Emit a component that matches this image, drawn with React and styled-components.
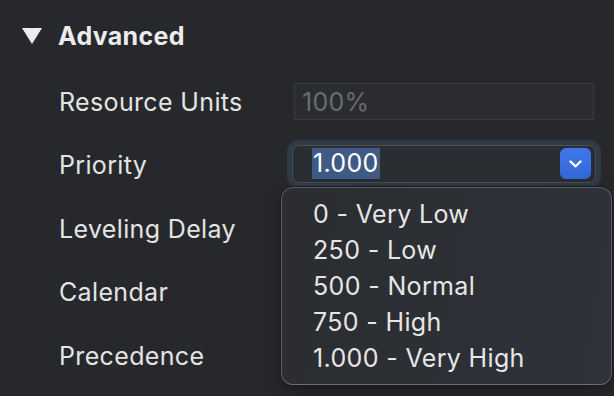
import React from "react";
import styled, { createGlobalStyle } from "styled-components";

const Global = createGlobalStyle`
  html, body { margin: 0; padding: 0; background: #26282b; }
  body { font-family: Inter, "Noto Sans", sans-serif; -webkit-font-smoothing: antialiased; }
`;

const Page = styled.div`
  width: 614px;
  height: 396px;
  overflow: hidden;
  background: #26282b;
  padding-top: 4px;
  box-sizing: border-box;
`;

const Header = styled.div`
  height: 64px;
  display: flex;
  align-items: center;
  padding-left: 22px;
  gap: 16px;
`;

const Triangle = styled.span`
  width: 0;
  height: 0;
  border-left: 10.5px solid transparent;
  border-right: 10.5px solid transparent;
  border-top: 16px solid #ececec;
`;

const Title = styled.span`
  font-size: 25px;
  font-weight: 700;
  letter-spacing: 0.3px;
  color: #ececec;
  line-height: 64px;
`;

const Rows = styled.div`
  margin-top: 2px;
  display: grid;
  grid-template-columns: 233px 304px;
  grid-auto-rows: 63.5px;
  padding-left: 59px;
  align-items: center;
`;

const Label = styled.div`
  font-size: 25px;
  letter-spacing: 0.35px;
  color: #e4e4e4;
  line-height: 32px;
`;

const Field = styled.div`
  margin-left: 2px;
  width: 300px;
  height: 37px;
  box-sizing: border-box;
  background: #2a2c2f;
  border: 1px solid #393b3f;
  display: flex;
  align-items: center;
  padding-left: 7px;
  font-size: 25px;
  letter-spacing: 0.3px;
  color: #6a6c6f;
`;

const SelectWrap = styled.div`
  position: relative;
  width: 304px;
  height: 38px;
  margin-top: -3px;
`;

const Select = styled.div`
  width: 100%;
  height: 100%;
  box-sizing: border-box;
  border: 1px solid #4b5058;
  border-radius: 7px;
  background: #2a2d31;
  box-shadow: 0 0 0 5px #303a46;
  display: flex;
  align-items: center;
  padding-left: 19px;
  padding-right: 4px;
`;

const Selected = styled.span`
  background: #3f5a84;
  color: #ffffff;
  font-size: 25px;
  letter-spacing: 0.3px;
  line-height: 31px;
  height: 31px;
  padding: 0 1px;
`;

const ChevronButton = styled.span`
  margin-left: auto;
  width: 31px;
  height: 31px;
  border-radius: 6px;
  background: linear-gradient(#3f77ea, #3467d8);
  display: flex;
  align-items: center;
  justify-content: center;
`;

const Menu = styled.div`
  position: absolute;
  left: -11px;
  top: 42px;
  width: 331px;
  height: 198px;
  box-sizing: border-box;
  border-radius: 12px;
  border: 1px solid #595c61;
  border-bottom-color: #6b6e73;
  background: linear-gradient(100deg, #2b2d30 0%, #2c2f34 50%, #2e333c 100%);
  box-shadow: 0 0 0 1px #1c1d1f, 0 6px 18px rgba(0, 0, 0, 0.35);
  padding: 8px 0 8px 31px;
  z-index: 2;
`;

const Item = styled.div`
  font-size: 25px;
  letter-spacing: 0.35px;
  line-height: 36px;
  color: #e6e6e6;
  white-space: nowrap;
`;

const items = ["0 - Very Low", "250 - Low", "500 - Normal", "750 - High", "1.000 - Very High"];

export default function App() {
  return (
    <>
      <Global />
      <Page>
        <Header>
          <Triangle />
          <Title>Advanced</Title>
        </Header>
        <Rows>
          <Label>Resource Units</Label>
          <Field>100%</Field>
          <Label>Priority</Label>
          <SelectWrap>
            <Select>
              <Selected>1.000</Selected>
              <ChevronButton>
                <svg width="13" height="8" viewBox="0 0 13 8">
                  <polyline points="1.5,1.5 6.5,6.3 11.5,1.5" fill="none" stroke="#fff" strokeWidth="2.3" strokeLinecap="round" strokeLinejoin="round" />
                </svg>
              </ChevronButton>
            </Select>
            <Menu>
              {items.map((t) => (
                <Item key={t}>{t}</Item>
              ))}
            </Menu>
          </SelectWrap>
          <Label>Leveling Delay</Label>
          <div />
          <Label>Calendar</Label>
          <div />
          <Label>Precedence</Label>
          <div />
        </Rows>
      </Page>
    </>
  );
}
